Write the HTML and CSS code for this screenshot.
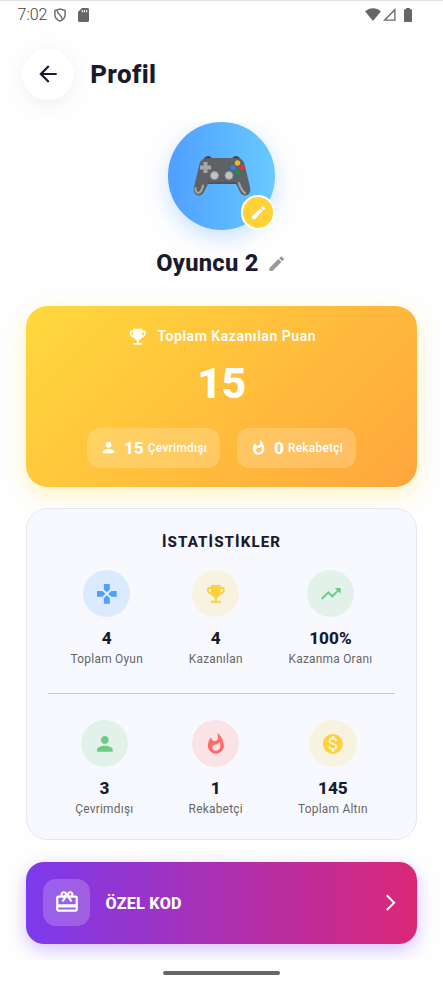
FILE: index.html
```html
<!DOCTYPE html>
<html lang="tr">
<head>
<meta charset="utf-8">
<meta name="viewport" content="width=device-width, initial-scale=1">
<title>Profil</title>
<link rel="stylesheet" href="styles.css">
</head>
<body>
<svg class="sprite" aria-hidden="true">
  <symbol id="edit" viewBox="0 0 24 24"><path d="M3 17.25V21h3.75L17.81 9.94l-3.75-3.75L3 17.25zM20.71 7.04c.39-.39.39-1.02 0-1.41l-2.34-2.34c-.39-.39-1.02-.39-1.41 0l-1.83 1.83 3.75 3.75 1.83-1.83z"/></symbol>
  <symbol id="trophy" viewBox="0 0 24 24"><path d="M19 5h-2V3H7v2H5c-1.1 0-2 .9-2 2v1c0 2.55 1.92 4.63 4.39 4.94.63 1.5 1.98 2.63 3.61 2.96V19H7v2h10v-2h-4v-3.1c1.63-.33 2.98-1.46 3.61-2.96C19.08 12.63 21 10.55 21 8V7c0-1.1-.9-2-2-2zM5 8V7h2v3.82C5.84 10.4 5 9.3 5 8zm14 0c0 1.3-.84 2.4-2 2.82V7h2v1z"/></symbol>
  <symbol id="person" viewBox="0 0 24 24"><path d="M12 12c2.21 0 4-1.79 4-4s-1.79-4-4-4-4 1.79-4 4 1.79 4 4 4zm0 2c-2.67 0-8 1.34-8 4v2h16v-2c0-2.66-5.33-4-8-4z"/></symbol>
  <symbol id="fire" viewBox="0 0 24 24"><path d="M13.5.67s.74 2.65.74 4.8c0 2.06-1.35 3.73-3.41 3.73-2.07 0-3.63-1.67-3.63-3.73l.03-.36C5.21 7.51 4 10.62 4 14c0 4.42 3.58 8 8 8s8-3.58 8-8C20 8.61 17.41 3.8 13.5.67zM11.71 19c-1.78 0-3.22-1.4-3.22-3.14 0-1.62 1.05-2.76 2.81-3.12 1.77-.36 3.6-1.21 4.62-2.58.39 1.29.59 2.65.59 4.04 0 2.65-2.15 4.8-4.8 4.8z"/></symbol>
</svg>

<header class="statusbar">
  <span class="clock">7:02</span>
  <svg class="shield" viewBox="0 0 12 14"><path d="M6 .9 11.1 2.5v4c0 3.200-2 5.400-5.100 6.700C2.900 11.900.9 9.700.9 6.500v-4z"/><path d="M3.300 2.200c-.5 4.600 4.400 3.700 4.800 8.900"/></svg>
  <svg class="sdcard" viewBox="0 0 11 14"><path fill-rule="evenodd" d="M4 0h5.500Q11 0 11 1.500v11Q11 14 9.500 14h-8Q0 14 0 12.500V4zM3.700 2v2.300h1.100V2zM5.900 2v2.300H7V2zM8.100 2v2.300h1.100V2z"/></svg>
  <span class="spacer"></span>
  <svg class="wifi" viewBox="0 0 16 13"><path d="M8 13 .2 3.500C4.500-.9 11.500-.9 15.800 3.500z"/></svg>
  <svg class="signal" viewBox="0 0 13 13"><path d="M11.900 1.700v10.500H1.500z"/></svg>
  <svg class="battery" viewBox="0 0 8 14"><path d="M2 0h4v1.200h1q1 0 1 1V13q0 1-1 1H1q-1 0-1-1V2.200q0-1 1-1h1z"/></svg>
</header>

<nav class="topbar">
  <button class="back" aria-label="Geri"><svg viewBox="0 0 24 24"><path d="M20 11H7.830l5.590-5.590L12 4l-8 8 8 8 1.410-1.410L7.830 13H20v-2z"/></svg></button>
  <h1>Profil</h1>
</nav>

<main>
  <section class="profile">
    <div class="avatar">
      <svg class="pad" viewBox="0 0 58 42">
        <path fill="#404346" d="M10 6Q11 1 16 1l3 2v4H10zM48 6Q47 1 42 1l-3 2v4h9z"/>
        <path fill="#5e6165" d="M15 3h28c6 0 8 3 9 8l5 21c2 9-7 11-10 5l-4-8H15l-4 8C8 43-1 41 1 32L6 11c1-5 3-8 9-8z"/>
        <path fill="#505357" d="M15 27h28l1 2H14z"/>
        <path fill="none" stroke="#a2a4a6" stroke-width="2.200" stroke-linecap="round" d="M2.500 33q0 6 4 4.500 2-1 3.500-7M46 28q2 7 6 10"/>
        <path fill="#a4a6a8" d="M10.500 7h4v3.500H18v4h-3.500V18h-4v-3.500H7v-4h3.500z"/>
        <g fill="#c3c3c3" stroke="#929497"><circle cx="21.500" cy="20.500" r="4"/><circle cx="36" cy="20.500" r="4"/></g>
        <circle cx="44.500" cy="8" r="2.700" fill="#f5b51b"/><circle cx="40" cy="12.500" r="2.700" fill="#327ee6"/><circle cx="49" cy="12.500" r="2.700" fill="#e62f38"/><circle cx="44.500" cy="17" r="2.700" fill="#12964f"/>
      </svg>
      <span class="badge"><svg><use href="#edit"/></svg></span>
    </div>
    <h2>Oyuncu 2 <svg><use href="#edit"/></svg></h2>
  </section>

  <section class="score">
    <p class="score-title"><svg><use href="#trophy"/></svg><span>Toplam Kazanılan Puan</span></p>
    <p class="total">15</p>
    <div class="chips">
      <div class="chip"><svg><use href="#person"/></svg><b>15</b><span>Çevrimdışı</span></div>
      <div class="chip"><svg><use href="#fire"/></svg><b>0</b><span>Rekabetçi</span></div>
    </div>
  </section>

  <section class="stats">
    <h3>İSTATİSTİKLER</h3>
    <div class="row">
      <div class="stat"><i class="blue"><svg viewBox="0 0 24 24"><path d="M15 7.500V2H9v5.500l3 3 3-3zM7.500 9H2v6h5.500l3-3-3-3zM9 16.500V22h6v-5.500l-3-3-3 3zM16.500 9l-3 3 3 3H22V9h-5.500z"/></svg></i><b>4</b><span>Toplam Oyun</span></div>
      <div class="stat"><i class="gold"><svg><use href="#trophy"/></svg></i><b>4</b><span>Kazanılan</span></div>
      <div class="stat"><i class="green"><svg viewBox="0 0 24 24"><path d="M16 6l2.290 2.290-4.880 4.880-4-4L2 16.590 3.410 18l6-6 4 4 6.300-6.290L22 12V6z"/></svg></i><b>100%</b><span>Kazanma Oranı</span></div>
    </div>
    <hr>
    <div class="row">
      <div class="stat"><i class="green"><svg><use href="#person"/></svg></i><b>3</b><span>Çevrimdışı</span></div>
      <div class="stat"><i class="red"><svg><use href="#fire"/></svg></i><b>1</b><span>Rekabetçi</span></div>
      <div class="stat"><i class="gold"><svg viewBox="0 0 24 24"><path d="M12 2C6.480 2 2 6.480 2 12s4.480 10 10 10 10-4.480 10-10S17.520 2 12 2zm1.410 16.090V20h-2.670v-1.930c-1.710-.36-3.160-1.460-3.270-3.400h1.960c.1 1.050.82 1.870 2.650 1.870 1.960 0 2.400-.98 2.400-1.590 0-.83-.44-1.610-2.670-2.140-2.480-.6-4.180-1.620-4.180-3.670 0-1.720 1.390-2.840 3.110-3.210V4h2.670v1.950c1.860.45 2.790 1.860 2.850 3.390H14.300c-.05-1.110-.64-1.870-2.220-1.870-1.500 0-2.400.68-2.400 1.640 0 .84.65 1.390 2.670 1.910s4.180 1.390 4.180 3.910c-.01 1.830-1.380 2.830-3.120 3.160z"/></svg></i><b>145</b><span>Toplam Altın</span></div>
    </div>
  </section>

  <button class="code">
    <span class="gift"><svg viewBox="0 0 24 24"><path d="M20 6h-2.180c.11-.31.18-.65.18-1 0-1.660-1.340-3-3-3-1.050 0-1.960.54-2.500 1.350l-.5.67-.5-.68C10.960 2.540 10.050 2 9 2 7.340 2 6 3.340 6 5c0 .35.07.69.18 1H4c-1.110 0-1.990.89-1.990 2L2 19c0 1.110.89 2 2 2h16c1.110 0 2-.89 2-2V8c0-1.110-.89-2-2-2zm-5-2c.55 0 1 .45 1 1s-.45 1-1 1-1-.45-1-1 .45-1 1-1zM9 4c.55 0 1 .45 1 1s-.45 1-1 1-1-.45-1-1 .45-1 1-1zm11 15H4v-2h16v2zm0-5H4V8h5.080L7 10.830 8.620 12 11 8.760l1-1.360 1 1.360L15.380 12 17 10.830 14.920 8H20v6z"/></svg></span>
    <span class="code-label">ÖZEL KOD</span>
    <svg class="chevron" viewBox="0 0 24 24"><path d="M6.230 20.230L8 22l10-10L8 2 6.230 3.770 14.460 12z"/></svg>
  </button>
</main>

<footer class="gesture"><span></span></footer>
</body>
</html>
```
FILE: styles.css
```css
* { box-sizing: border-box; }

body {
  margin: 0;
  width: 443px;
  height: 985px;
  overflow: hidden;
  display: flex;
  flex-direction: column;
  background: #fefefe;
  color: #1a1a2e;
  font-family: Roboto, "Liberation Sans", sans-serif;
}

h1, h2, h3, p { margin: 0; }
svg { display: block; fill: currentColor; flex: none; }
button { border: 0; padding: 0; font: inherit; color: inherit; }
.sprite { display: none; }

.statusbar {
  height: 28px;
  flex: none;
  display: flex;
  align-items: center;
  padding: 0 31px 0 17.5px;
  border-top: 1px solid #e3e3e3;
  color: #666;
}
.clock { width: 36px; font-size: 16px; font-weight: 300; line-height: 20px; color: #444; }
.shield { width: 12px; height: 14px; fill: none; stroke: #666; stroke-width: 1.4; }
.sdcard { width: 11px; height: 14px; margin-left: 12px; }
.spacer { flex: 1; }
.wifi { width: 16px; height: 13px; }
.signal { width: 13px; height: 13px; margin: 0 8px 0 2px; fill: none; stroke: #666; stroke-width: 1.3; }
.battery { width: 8px; height: 14px; }

.topbar {
  height: 94px;
  flex: none;
  display: flex;
  align-items: flex-start;
  padding: 20.5px 22px 0;
}
.back {
  width: 51.7px;
  height: 51.7px;
  display: grid;
  place-items: center;
  border-radius: 50%;
  background: #fff;
  box-shadow: 0 4px 21px rgba(0, 0, 0, .06);
}
.back svg { width: 26px; height: 26px; }
h1 { margin-left: 16.5px; font-size: 25.9px; line-height: 51.7px; font-weight: 800; letter-spacing: .4px; }

main {
  height: 838px;
  flex: none;
  overflow: hidden;
  padding: 0 26px;
}

.profile { height: 184px; display: flex; flex-direction: column; align-items: center; }
.avatar {
  position: relative;
  width: 107.7px;
  height: 107.7px;
  display: grid;
  place-items: center;
  border-radius: 50%;
  background: linear-gradient(90deg, #4f9fff, #68caff);
  box-shadow: 0 8px 22px rgba(79, 160, 255, .3);
}
.pad { width: 58px; height: 42px; }
.badge {
  position: absolute;
  right: 0;
  bottom: 0;
  width: 34.5px;
  height: 34.5px;
  display: grid;
  place-items: center;
  border: 2.2px solid #fff;
  border-radius: 50%;
  background: #ffd338;
  color: #fff;
}
.badge svg { width: 17.2px; height: 17.2px; }
h2 { display: flex; align-items: center; gap: 8.8px; margin-top: 18.6px; font-size: 23.7px; line-height: 30px; font-weight: 800; letter-spacing: .25px; }
h2 svg { width: 19.4px; height: 19.4px; color: #999; }

.score {
  height: 181px;
  padding: 20.4px 0 0;
  border-radius: 21.5px;
  background: linear-gradient(135deg, #ffd93d, #ffa63c);
  box-shadow: 0 8px 22px rgba(255, 217, 61, .3);
  color: #fff;
}
.score-title { display: flex; justify-content: center; align-items: center; gap: 9px; height: 20px; font-size: 14px; font-weight: 600; letter-spacing: .54px; }
.score-title svg { width: 21.5px; height: 21.5px; }
.total { margin-top: 10.3px; font-size: 43.1px; line-height: 54px; font-weight: 800; letter-spacing: -.5px; text-align: center; }
.chips { display: flex; justify-content: center; gap: 16.5px; margin-top: 17.3px; }
.chip { height: 40px; display: flex; align-items: center; padding: 0 13px; border-radius: 13px; background: rgba(255, 255, 255, .2); }
.chip svg { width: 17.2px; height: 17.2px; margin-right: 7px; }
.chip b { font-size: 17.2px; font-weight: 800; letter-spacing: -.2px; }
.chip span { margin-left: 4.3px; font-size: 11.9px; font-weight: 500; letter-spacing: .28px; }

.stats {
  height: 331.5px;
  margin-top: 21px;
  padding: 23.4px 20.7px 0;
  border: 1px solid #e4e6f0;
  border-radius: 21.5px;
  background: #f8f9ff;
}
h3 { font-size: 15.1px; line-height: 20px; font-weight: 800; letter-spacing: 1.08px; text-align: center; }
.row { display: flex; justify-content: space-around; margin-top: 17.6px; }
.stat { display: flex; flex-direction: column; align-items: center; }
.stat i { width: 47.4px; height: 47.4px; display: grid; place-items: center; border-radius: 50%; }
.stat svg { width: 23.7px; height: 23.7px; }
.stat b { margin-top: 10.6px; font-size: 17.2px; line-height: 21px; font-weight: 800; }
.stat span { margin-top: 3.2px; font-size: 11.9px; line-height: 15px; letter-spacing: .25px; color: #666; }
.blue { color: #529ff9; background: #dceaff; }
.gold { color: #fbd23b; background: #f8f3e1; }
.green { color: #6bcb80; background: #e2f2ea; }
.red { color: #ff6b6b; background: #f9e3e7; }
hr { height: 1px; margin: 25.6px 0 26px; border: 0; background: #c8c9d2; }

.code {
  width: 100%;
  height: 82px;
  display: flex;
  align-items: center;
  margin-top: 22px;
  padding: 0 17px;
  border-radius: 18px;
  background: linear-gradient(90deg, #7c3aed, #db2777);
  box-shadow: 0 6px 17px rgba(124, 58, 237, .3);
  color: #fff;
}
.gift { width: 47.4px; height: 47.4px; display: grid; place-items: center; border-radius: 13px; background: rgba(255, 255, 255, .2); }
.gift svg { width: 26px; height: 26px; }
.code-label { flex: 1; margin-left: 15px; padding-top: 1px; font-size: 16.2px; font-weight: 800; letter-spacing: .25px; text-align: left; }
.chevron { width: 19.4px; height: 19.4px; }

.gesture { flex: 1; display: flex; justify-content: center; padding-top: 11px; }
.gesture span { width: 117px; height: 4px; border-radius: 2px; background: #666; }
```
